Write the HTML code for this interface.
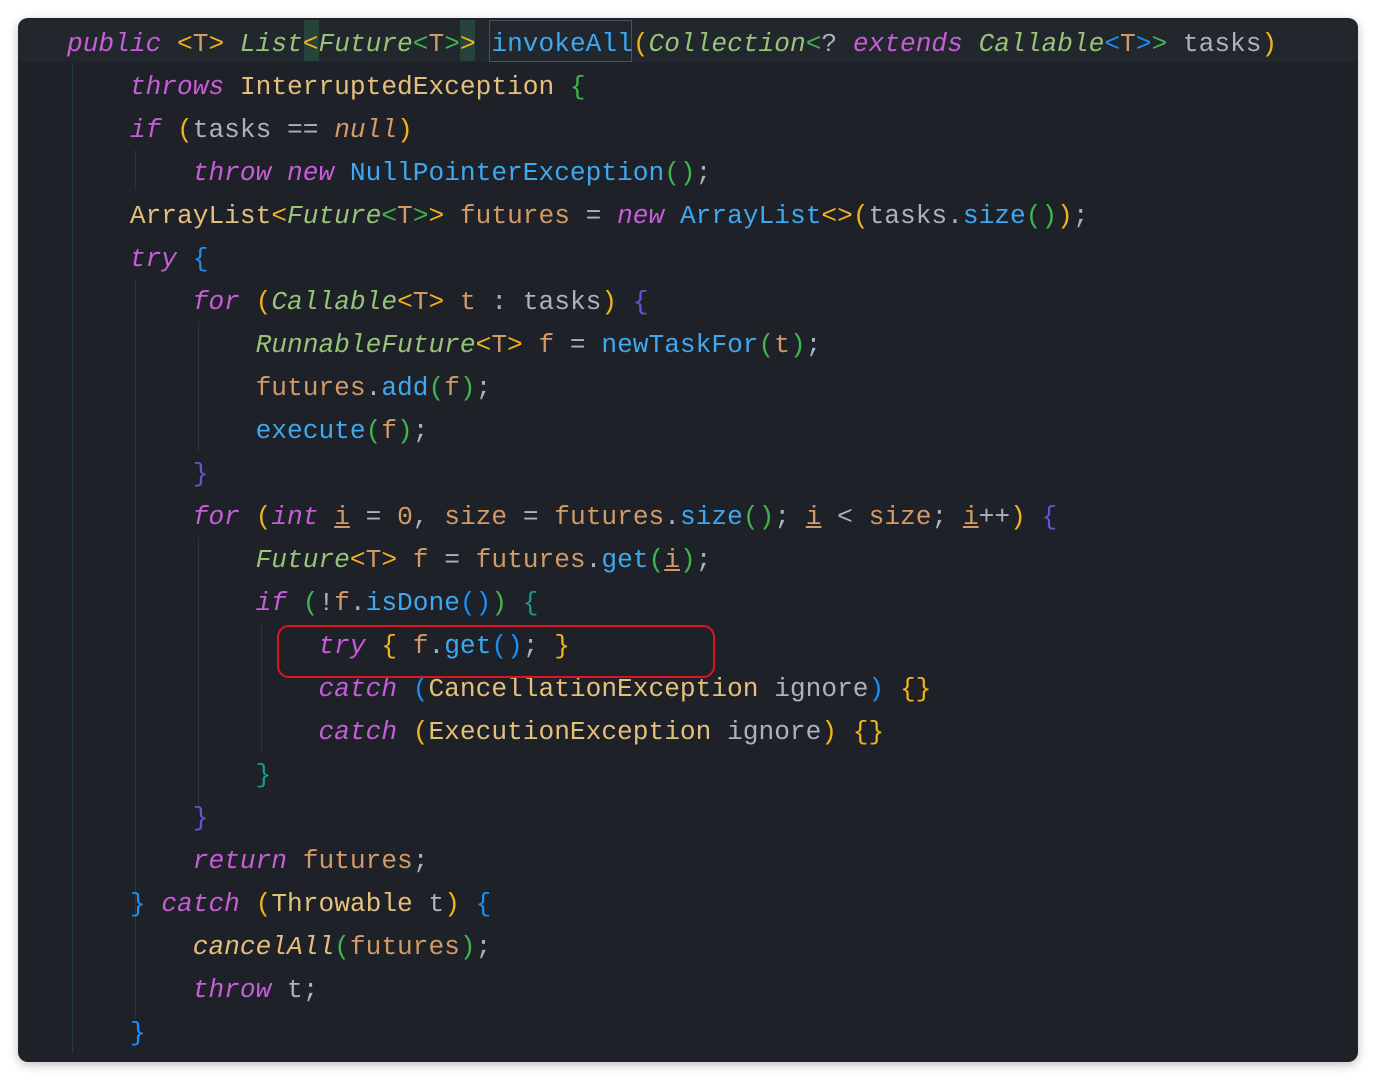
<!DOCTYPE html>
<html><head><meta charset="utf-8"><style>
html,body{margin:0;padding:0;background:#fff;width:1376px;height:1080px;overflow:hidden}
.panel{position:absolute;left:18px;top:18px;width:1340px;height:1044px;background:#1e2128;border-radius:10px;box-shadow:0 3px 10px rgba(0,0,0,.25);overflow:hidden}
.hl{position:absolute;left:0;top:2px;width:1340px;height:42px;background:#22262d}
.l{position:absolute;left:49px;height:43px;line-height:43px;margin-top:3px;font-family:"Liberation Mono","DejaVu Sans Mono",monospace;font-size:26.2px;white-space:pre;color:#abb2bf}
.k{color:#c75ed8;font-style:italic}.t{color:#e5c07b}.v{color:#d19a66}.f{color:#3ea8f0}.g{color:#98c379;font-style:italic}
.y{color:#f0b31a}.gr{color:#3fb54f}.b{color:#1b8ff5}.pb{color:#5a5ad8}.te{color:#1a9b8a}
.u{text-decoration:underline}
.guide{position:absolute;width:1px;background:#2c333d}
.box{position:absolute;left:259px;top:607px;width:434px;height:49px;border:2px solid #e0141e;border-radius:12px}
.sel{position:absolute;left:471px;top:2px;width:141px;height:40px;border:1px solid #4a5160}
.mk{position:absolute;top:2px;height:41px;width:15px;background:#27443a}
</style></head><body>
<div class="panel">
<div class="hl"></div>
<div class="mk" style="left:286px"></div>
<div class="mk" style="left:442px"></div>
<div class="sel"></div>
<div class="guide" style="left:54px;top:45px;height:990px;background:#24403a"></div>
<div class="guide" style="left:117px;top:132px;height:40px"></div>
<div class="guide" style="left:117px;top:261px;height:740px"></div>
<div class="guide" style="left:180px;top:304px;height:130px"></div>
<div class="guide" style="left:180px;top:519px;height:270px"></div>
<div class="guide" style="left:243px;top:605px;height:130px"></div>
<div class="l" style="top:2px"><span class="k">public</span> <span class="y">&lt;</span><span class="v">T</span><span class="y">&gt;</span> <span class="g">List</span><span class="y">&lt;</span><span class="g">Future</span><span class="gr">&lt;</span><span class="v">T</span><span class="gr">&gt;</span><span class="y">&gt;</span> <span class="f">invokeAll</span><span class="y">(</span><span class="g">Collection</span><span class="gr">&lt;</span>? <span class="k">extends</span> <span class="g">Callable</span><span class="b">&lt;</span><span class="v">T</span><span class="b">&gt;</span><span class="gr">&gt;</span> tasks<span class="y">)</span></div>
<div class="l" style="top:45px">    <span class="k">throws</span> <span class="t">InterruptedException</span> <span class="gr">{</span></div>
<div class="l" style="top:88px">    <span class="k">if</span> <span class="y">(</span>tasks == <span class="v" style="font-style:italic">null</span><span class="y">)</span></div>
<div class="l" style="top:131px">        <span class="k">throw</span> <span class="k">new</span> <span class="f">NullPointerException</span><span class="gr">()</span>;</div>
<div class="l" style="top:174px">    <span class="t">ArrayList</span><span class="y">&lt;</span><span class="g">Future</span><span class="gr">&lt;</span><span class="v">T</span><span class="gr">&gt;</span><span class="y">&gt;</span> <span class="v">futures</span> = <span class="k">new</span> <span class="f">ArrayList</span><span class="y">&lt;&gt;</span><span class="y">(</span>tasks.<span class="f">size</span><span class="gr">()</span><span class="y">)</span>;</div>
<div class="l" style="top:217px">    <span class="k">try</span> <span class="b">{</span></div>
<div class="l" style="top:260px">        <span class="k">for</span> <span class="y">(</span><span class="g">Callable</span><span class="y">&lt;</span><span class="v">T</span><span class="y">&gt;</span> <span class="v">t</span> : tasks<span class="y">)</span> <span class="pb">{</span></div>
<div class="l" style="top:303px">            <span class="g">RunnableFuture</span><span class="y">&lt;</span><span class="v">T</span><span class="y">&gt;</span> <span class="v">f</span> = <span class="f">newTaskFor</span><span class="gr">(</span><span class="v">t</span><span class="gr">)</span>;</div>
<div class="l" style="top:346px">            <span class="v">futures</span>.<span class="f">add</span><span class="gr">(</span><span class="v">f</span><span class="gr">)</span>;</div>
<div class="l" style="top:389px">            <span class="f">execute</span><span class="gr">(</span><span class="v">f</span><span class="gr">)</span>;</div>
<div class="l" style="top:432px">        <span class="pb">}</span></div>
<div class="l" style="top:475px">        <span class="k">for</span> <span class="y">(</span><span class="k">int</span> <span class="v u">i</span> = <span class="v">0</span>, <span class="v">size</span> = <span class="v">futures</span>.<span class="f">size</span><span class="gr">()</span>; <span class="v u">i</span> &lt; <span class="v">size</span>; <span class="v u">i</span>++<span class="y">)</span> <span class="pb">{</span></div>
<div class="l" style="top:518px">            <span class="g">Future</span><span class="y">&lt;</span><span class="v">T</span><span class="y">&gt;</span> <span class="v">f</span> = <span class="v">futures</span>.<span class="f">get</span><span class="gr">(</span><span class="v u">i</span><span class="gr">)</span>;</div>
<div class="l" style="top:561px">            <span class="k">if</span> <span class="gr">(</span>!<span class="v">f</span>.<span class="f">isDone</span><span class="b">()</span><span class="gr">)</span> <span class="te">{</span></div>
<div class="l" style="top:604px">                <span class="k">try</span> <span class="y">{</span> <span class="v">f</span>.<span class="f">get</span><span class="b">()</span>; <span class="y">}</span></div>
<div class="l" style="top:647px">                <span class="k">catch</span> <span class="b">(</span><span class="t">CancellationException</span> ignore<span class="b">)</span> <span class="y">{}</span></div>
<div class="l" style="top:690px">                <span class="k">catch</span> <span class="y">(</span><span class="t">ExecutionException</span> ignore<span class="y">)</span> <span class="y">{}</span></div>
<div class="l" style="top:733px">            <span class="te">}</span></div>
<div class="l" style="top:776px">        <span class="pb">}</span></div>
<div class="l" style="top:819px">        <span class="k">return</span> <span class="v">futures</span>;</div>
<div class="l" style="top:862px">    <span class="b">}</span> <span class="k">catch</span> <span class="y">(</span><span class="t">Throwable</span> t<span class="y">)</span> <span class="b">{</span></div>
<div class="l" style="top:905px">        <span class="t" style="font-style:italic">cancelAll</span><span class="gr">(</span><span class="v">futures</span><span class="gr">)</span>;</div>
<div class="l" style="top:948px">        <span class="k">throw</span> t;</div>
<div class="l" style="top:991px">    <span class="b">}</span></div>
<div class="box"></div>
</div>
</body></html>
